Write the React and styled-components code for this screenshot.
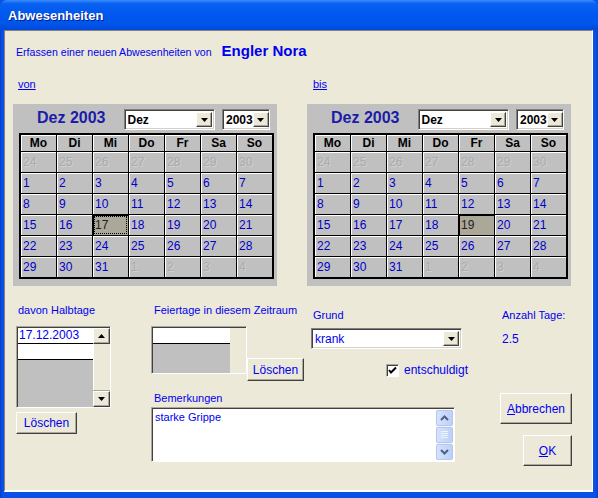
import React from 'react';
import styled, { createGlobalStyle } from 'styled-components';

const GlobalStyle = createGlobalStyle`
  html, body { margin: 0; padding: 0; background: #ECE9D8; }
  body { font-family: "Liberation Sans", Arial, sans-serif; }
`;

const BLUE = '#0000F0';

const Window = styled.div`
  width: 598px;
  height: 498px;
  display: flex;
  flex-direction: column;
  background: #0A52E6;
  overflow: hidden;
`;

const TitleBar = styled.div`
  height: 30px;
  flex: none;
  display: flex;
  align-items: center;
  padding-left: 8px;
  border-radius: 7px 7px 0 0;
  background: linear-gradient(to bottom, #3A8CFF 0%, #0A62F2 12%, #0058EE 45%, #0055EA 80%, #0048D8 100%);
  color: #fff;
  font-weight: bold;
  font-size: 13px;
  text-shadow: 1px 1px #0A1A8A;
`;

const Frame = styled.div`
  flex: 1;
  display: flex;
  padding: 0 5px 6px 4px;
  background: linear-gradient(to right, #0A3FD0 0, #0A52E6 3px, #0A52E6 calc(100% - 3px), #0A3FD0 100%);
`;

const Client = styled.div`
  flex: 1;
  background: #ECE9D8;
  border-top: 1px solid #808080;
  border-left: 1px solid #808080;
  border-right: 1px solid #fff;
  border-bottom: 2px solid #fff;
  display: flex;
  flex-direction: column;
  padding-left: 8px;
  color: ${BLUE};
  font-size: 11px;
`;

const Header = styled.div`
  margin-top: 11px;
  margin-left: 3px;
  height: 16px;
  display: flex;
  align-items: baseline;
  gap: 10px;
  font-size: 10.6px;
`;

const Name = styled.span`
  font-size: 15px;
  font-weight: bold;
`;

const CalRow = styled.div`
  display: flex;
  gap: 30px;
  margin-top: 20px;
`;

const CalColumn = styled.div`
  display: flex;
  flex-direction: column;
`;

const LinkLabel = styled.span`
  text-decoration: underline;
  line-height: 13px;
  margin-left: ${p => p.$indent}px;
  margin-bottom: 13px;
`;

const CalBox = styled.div`
  width: 264px;
  height: 182px;
  box-sizing: border-box;
  background: #C0C0C0;
  padding: 5px 0 0 6px;
`;

const CalHead = styled.div`
  display: flex;
  align-items: flex-start;
  height: 24px;
`;

const CalTitle = styled.div`
  width: 105px;
  padding-left: 18px;
  box-sizing: border-box;
  color: #1C1CA8;
  font-size: 16px;
  font-weight: bold;
  line-height: 18px;
`;

const Select = styled.div`
  width: ${p => p.$w}px;
  height: 21px;
  margin-right: 7px;
  box-sizing: border-box;
  background: #fff;
  border-top: 1px solid #808080;
  border-left: 1px solid #808080;
  border-right: 1px solid #fff;
  border-bottom: 1px solid #fff;
  box-shadow: inset 1px 1px #404040, inset -1px -1px #D4D0C8;
  display: flex;
  align-items: center;
  justify-content: space-between;
  padding: 2px;
  color: ${p => p.$color || '#000'};
  font-weight: ${p => p.$bold ? 'bold' : 'normal'};
  font-size: 12px;
`;

const SelectText = styled.span`
  padding-left: 1px;
`;

const DropBtn = styled.div`
  width: 16px;
  height: 100%;
  flex: none;
  box-sizing: border-box;
  background: #ECE9D8;
  border-top: 1px solid #fff;
  border-left: 1px solid #fff;
  border-right: 1px solid #404040;
  border-bottom: 1px solid #404040;
  box-shadow: inset -1px -1px #ACA899;
  display: flex;
  align-items: center;
  justify-content: center;
`;

const Arrow = ({ up }) => (
  <svg width="7" height="4" viewBox="0 0 7 4">
    <polygon points={up ? '0,4 7,4 3.5,0' : '0,0 7,0 3.5,4'} fill="#000" />
  </svg>
);

const Grid = styled.div`
  width: 255px;
  box-sizing: border-box;
  border: 2px solid #000;
  background: #000;
  display: grid;
  grid-template-columns: repeat(7, 35px);
  grid-template-rows: 16px repeat(6, 20px);
  gap: 1px;
`;

const HeadCell = styled.div`
  background: #C0C0C0;
  box-shadow: inset 1px 1px #fff;
  color: #000;
  font-weight: bold;
  font-size: 12px;
  display: flex;
  align-items: center;
  justify-content: center;
`;

const DayCell = styled.div`
  background: ${p => p.$selected ? '#ACA899' : '#C0C0C0'};
  box-shadow: ${p => p.$selected ? 'inset 1px 1px #000' : 'inset 1px 1px #fff'};
  outline: ${p => p.$focus ? '1px dotted #000' : 'none'};
  outline-offset: -2px;
  color: ${p => p.$other ? '#ABABAB' : p.$selected ? '#202020' : '#0000C8'};
  text-shadow: ${p => p.$other ? '1px 1px #D0D0D0' : 'none'};
  font-size: 12px;
  display: flex;
  align-items: center;
  padding-left: 2px;
`;

const DAYS = ['Mo', 'Di', 'Mi', 'Do', 'Fr', 'Sa', 'So'];

const buildDays = () => {
  const cells = [];
  for (let d = 24; d <= 30; d++) cells.push({ n: d, other: true });
  for (let d = 1; d <= 31; d++) cells.push({ n: d });
  for (let d = 1; d <= 4; d++) cells.push({ n: d, other: true });
  return cells;
};

const Calendar = ({ label, indent, selected, focus }) => (
  <CalColumn>
    <LinkLabel $indent={indent}>{label}</LinkLabel>
    <CalBox>
      <CalHead>
        <CalTitle>Dez 2003</CalTitle>
        <Select $w={92} $bold><SelectText>Dez</SelectText><DropBtn><Arrow /></DropBtn></Select>
        <Select $w={48} $bold><SelectText>2003</SelectText><DropBtn><Arrow /></DropBtn></Select>
      </CalHead>
      <Grid>
        {DAYS.map(d => <HeadCell key={d}>{d}</HeadCell>)}
        {buildDays().map((c, i) => {
          const sel = !c.other && c.n === selected;
          return (
            <DayCell key={i} $other={c.other} $selected={sel} $focus={sel && focus}>
              {c.n}
            </DayCell>
          );
        })}
      </Grid>
    </CalBox>
  </CalColumn>
);

const Bottom = styled.div`
  margin-top: 13px;
  margin-left: 3px;
  display: grid;
  grid-template-columns: 135px 160px 189px 1fr;
  grid-template-rows: 88px auto;
`;

const Block = styled.div`
  grid-column: ${p => p.$col};
  grid-row: ${p => p.$row};
  display: flex;
  flex-direction: column;
  align-items: flex-start;
  padding-top: ${p => p.$top || 0}px;
`;

const Label = styled.span`
  line-height: 13px;
  font-size: 11px;
  margin-left: ${p => p.$indent || 0}px;
  margin-bottom: ${p => p.$gap || 0}px;
`;

const Sunken = styled.div`
  box-sizing: border-box;
  border-top: 1px solid #ACA899;
  border-left: 1px solid #ACA899;
  border-right: 1px solid #fff;
  border-bottom: 1px solid #fff;
  box-shadow: inset 1px 1px #404040;
`;

const ListBox = styled(Sunken)`
  width: 95px;
  height: 82px;
  display: flex;
  padding: 1px 0 0 1px;
`;

const ListItems = styled.div`
  width: 76px;
  display: flex;
  flex-direction: column;
  background: #C0C0C0;
`;

const ListRow = styled.div`
  height: 15px;
  background: #fff;
  border-bottom: 1px solid #000;
  color: ${BLUE};
  font-size: 12px;
  line-height: 15px;
  padding-left: 1px;
`;

const ScrollBar = styled.div`
  width: 17px;
  display: flex;
  flex-direction: column;
  background: #ECE9D8;
  box-shadow: inset 1px 0 #fff;
`;

const ScrollBtn = styled.div`
  height: 16px;
  box-sizing: border-box;
  background: #ECE9D8;
  border-top: 1px solid #fff;
  border-left: 1px solid #fff;
  border-right: 1px solid #404040;
  border-bottom: 1px solid #404040;
  box-shadow: inset -1px -1px #ACA899;
  display: flex;
  align-items: center;
  justify-content: center;
`;

const ScrollTrack = styled.div`
  flex: 1;
  border-bottom: 1px solid #ACA899;
`;

const Button = styled.button`
  box-sizing: border-box;
  width: ${p => p.$w}px;
  height: ${p => p.$h}px;
  margin: 0;
  padding: 0;
  background: #ECE9D8;
  border-top: 1px solid #fff;
  border-left: 1px solid #fff;
  border-right: 1px solid #404040;
  border-bottom: 1px solid #404040;
  box-shadow: inset -1px -1px #ACA899;
  color: ${BLUE};
  font-family: "Liberation Sans", Arial, sans-serif;
  font-size: 12px;
  margin-top: ${p => p.$mt || 0}px;
  margin-left: ${p => p.$ml || 0}px;
  margin-bottom: ${p => p.$mb || 0}px;
`;

const FeierRow = styled.div`
  display: flex;
  align-items: flex-end;
`;

const FeierBox = styled(Sunken)`
  width: 96px;
  height: 48px;
  padding: 1px 0 0 1px;
  background: #ECE9D8;
`;

const FeierList = styled.div`
  width: 77px;
  height: 100%;
  background: #C0C0C0;
`;

const Combo = styled(Select)`
  margin: 0;
  height: 21px;
  color: ${BLUE};
`;

const CheckRow = styled.div`
  display: flex;
  align-items: center;
  gap: 5px;
  margin: 14px 0 0 75px;
  font-size: 12px;
`;

const CheckBox = styled(Sunken)`
  width: 13px;
  height: 13px;
  background: #fff;
  display: flex;
  align-items: center;
  justify-content: center;
`;

const Value = styled.span`
  font-size: 12px;
  margin: 10px 0 0 2px;
`;

const TextArea = styled(Sunken)`
  width: 304px;
  height: 55px;
  background: #fff;
  display: flex;
  justify-content: space-between;
  padding: 2px 1px 1px 3px;
  font-size: 11px;
  line-height: 14px;
`;

const XpScroll = styled.div`
  width: 17px;
  display: flex;
  flex-direction: column;
  gap: 1px;
  background: #F4F3EE;
`;

const XpPart = styled.div`
  flex: 1;
  box-sizing: border-box;
  border: 1px solid #B4C6EE;
  border-radius: 2px;
  background: linear-gradient(to right, #D6E2FD, #BCD0F8);
  display: flex;
  align-items: center;
  justify-content: center;
`;

const Chevron = ({ up }) => (
  <svg width="9" height="6" viewBox="0 0 9 6">
    <polyline points={up ? '1,5 4.5,1.5 8,5' : '1,1 4.5,4.5 8,1'} fill="none" stroke="#4D6185" strokeWidth="2" />
  </svg>
);

const Grip = () => (
  <svg width="7" height="8" viewBox="0 0 7 8">
    {[0, 2, 4, 6].map(y => <line key={y} x1="0" x2="7" y1={y + 0.5} y2={y + 0.5} stroke="#EEF4FE" />)}
  </svg>
);

const Mnemonic = styled.span`
  text-decoration: underline;
`;

export default function App() {
  return (
    <>
      <GlobalStyle />
      <Window>
        <TitleBar>Abwesenheiten</TitleBar>
        <Frame>
          <Client>
            <Header>
              <span>Erfassen einer neuen Abwesenheiten von</span>
              <Name>Engler Nora</Name>
            </Header>

            <CalRow>
              <Calendar label="von" indent={5} selected={17} focus />
              <Calendar label="bis" indent={6} selected={19} />
            </CalRow>

            <Bottom>
              <Block $col="1" $row="1 / 3" $top={5}>
                <Label $indent={2} $gap={9}>davon Halbtage</Label>
                <ListBox>
                  <ListItems>
                    <ListRow>17.12.2003</ListRow>
                    <ListRow />
                  </ListItems>
                  <ScrollBar>
                    <ScrollBtn><Arrow up /></ScrollBtn>
                    <ScrollTrack />
                    <ScrollBtn><Arrow /></ScrollBtn>
                  </ScrollBar>
                </ListBox>
                <Button $w={61} $h={22} $mt={4}>Löschen</Button>
              </Block>

              <Block $col="2" $row="1" $top={5}>
                <Label $indent={3} $gap={9}>Feiertage in diesem Zeitraum</Label>
                <FeierRow>
                  <FeierBox>
                    <FeierList>
                      <ListRow />
                    </FeierList>
                  </FeierBox>
                  <Button $w={57} $h={23} $mb={-7}>Löschen</Button>
                </FeierRow>
              </Block>

              <Block $col="3" $row="1" $top={10}>
                <Label $indent={2} $gap={6}>Grund</Label>
                <Combo $w={151}><SelectText>krank</SelectText><DropBtn><Arrow /></DropBtn></Combo>
                <CheckRow>
                  <CheckBox>
                    <svg width="9" height="9" viewBox="0 0 9 9">
                      <polyline points="1,4 3,6.5 8,1.5" fill="none" stroke="#000" strokeWidth="2" />
                    </svg>
                  </CheckBox>
                  entschuldigt
                </CheckRow>
              </Block>

              <Block $col="4" $row="1" $top={10}>
                <Label $indent={2}>Anzahl Tage:</Label>
                <Value>2.5</Value>
              </Block>

              <Block $col="2 / 4" $row="2" $top={5}>
                <Label $indent={3} $gap={2}>Bemerkungen</Label>
                <TextArea>
                  <span>starke Grippe</span>
                  <XpScroll>
                    <XpPart><Chevron up /></XpPart>
                    <XpPart><Grip /></XpPart>
                    <XpPart><Chevron /></XpPart>
                  </XpScroll>
                </TextArea>
              </Block>

              <Block $col="4" $row="2" $top={6}>
                <Button $w={72} $h={31}><Mnemonic>A</Mnemonic>bbrechen</Button>
                <Button $w={49} $h={31} $mt={11} $ml={23}><Mnemonic>O</Mnemonic>K</Button>
              </Block>
            </Bottom>
          </Client>
        </Frame>
      </Window>
    </>
  );
}
